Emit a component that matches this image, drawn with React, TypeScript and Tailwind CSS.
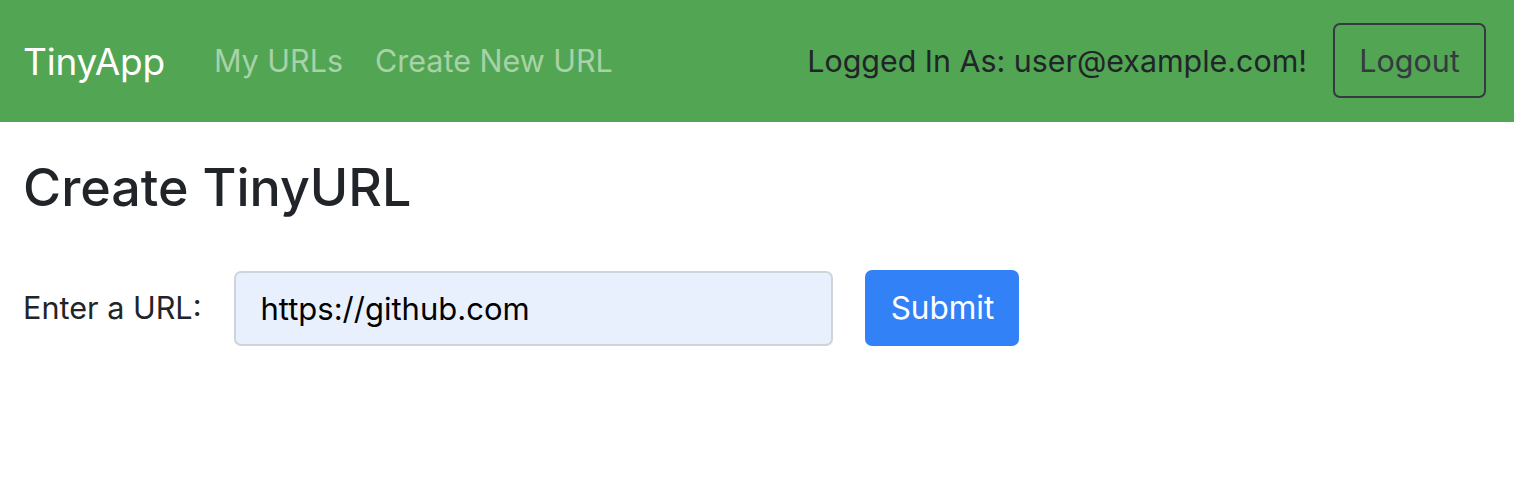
export default function App() {
  return (
    <div className="min-h-[484px] bg-white" style={{ fontFamily: 'Inter, "Noto Sans", sans-serif' }}>
      <nav className="flex h-[122px] items-center bg-[#52a552] pl-[23px] pr-[28px]">
        <span className="text-[37px] leading-none text-white tracking-[-0.2px]">TinyApp</span>
        <div className="ml-[49px] flex items-center gap-[32px] text-[30.5px] leading-none text-white/50">
          <span>My URLs</span>
          <span>Create New URL</span>
        </div>
        <div className="ml-auto flex items-center gap-[26px]">
          <span className="text-[30.4px] leading-none text-[#212529]">Logged In As: user@example.com!</span>
          <button className="mt-[-2px] flex h-[75px] w-[153px] items-center justify-center rounded-[7px] border-2 border-[#343a40] pt-[2px] text-[30.5px] text-[#343a40]">
            Logout
          </button>
        </div>
      </nav>
      <main className="px-[23px] pt-[40px]">
        <h1 className="text-[52px] font-medium leading-none text-[#212529]">Create TinyURL</h1>
        <form className="mt-[56px] flex items-center">
          <label className="text-[30.6px] text-[#212529]">Enter a URL:</label>
          <input
            className="ml-[33px] h-[75px] w-[599px] rounded-[7px] border-2 border-[#ced4da] bg-[#e8f0fe] px-[24px] text-[31px] text-black outline-none"
            defaultValue="https://github.com"
          />
          <button
            type="button"
            className="ml-[32px] h-[76px] w-[154px] rounded-[7px] bg-[#3381f6] text-[31.5px] text-white"
          >
            Submit
          </button>
        </form>
      </main>
    </div>
  );
}
